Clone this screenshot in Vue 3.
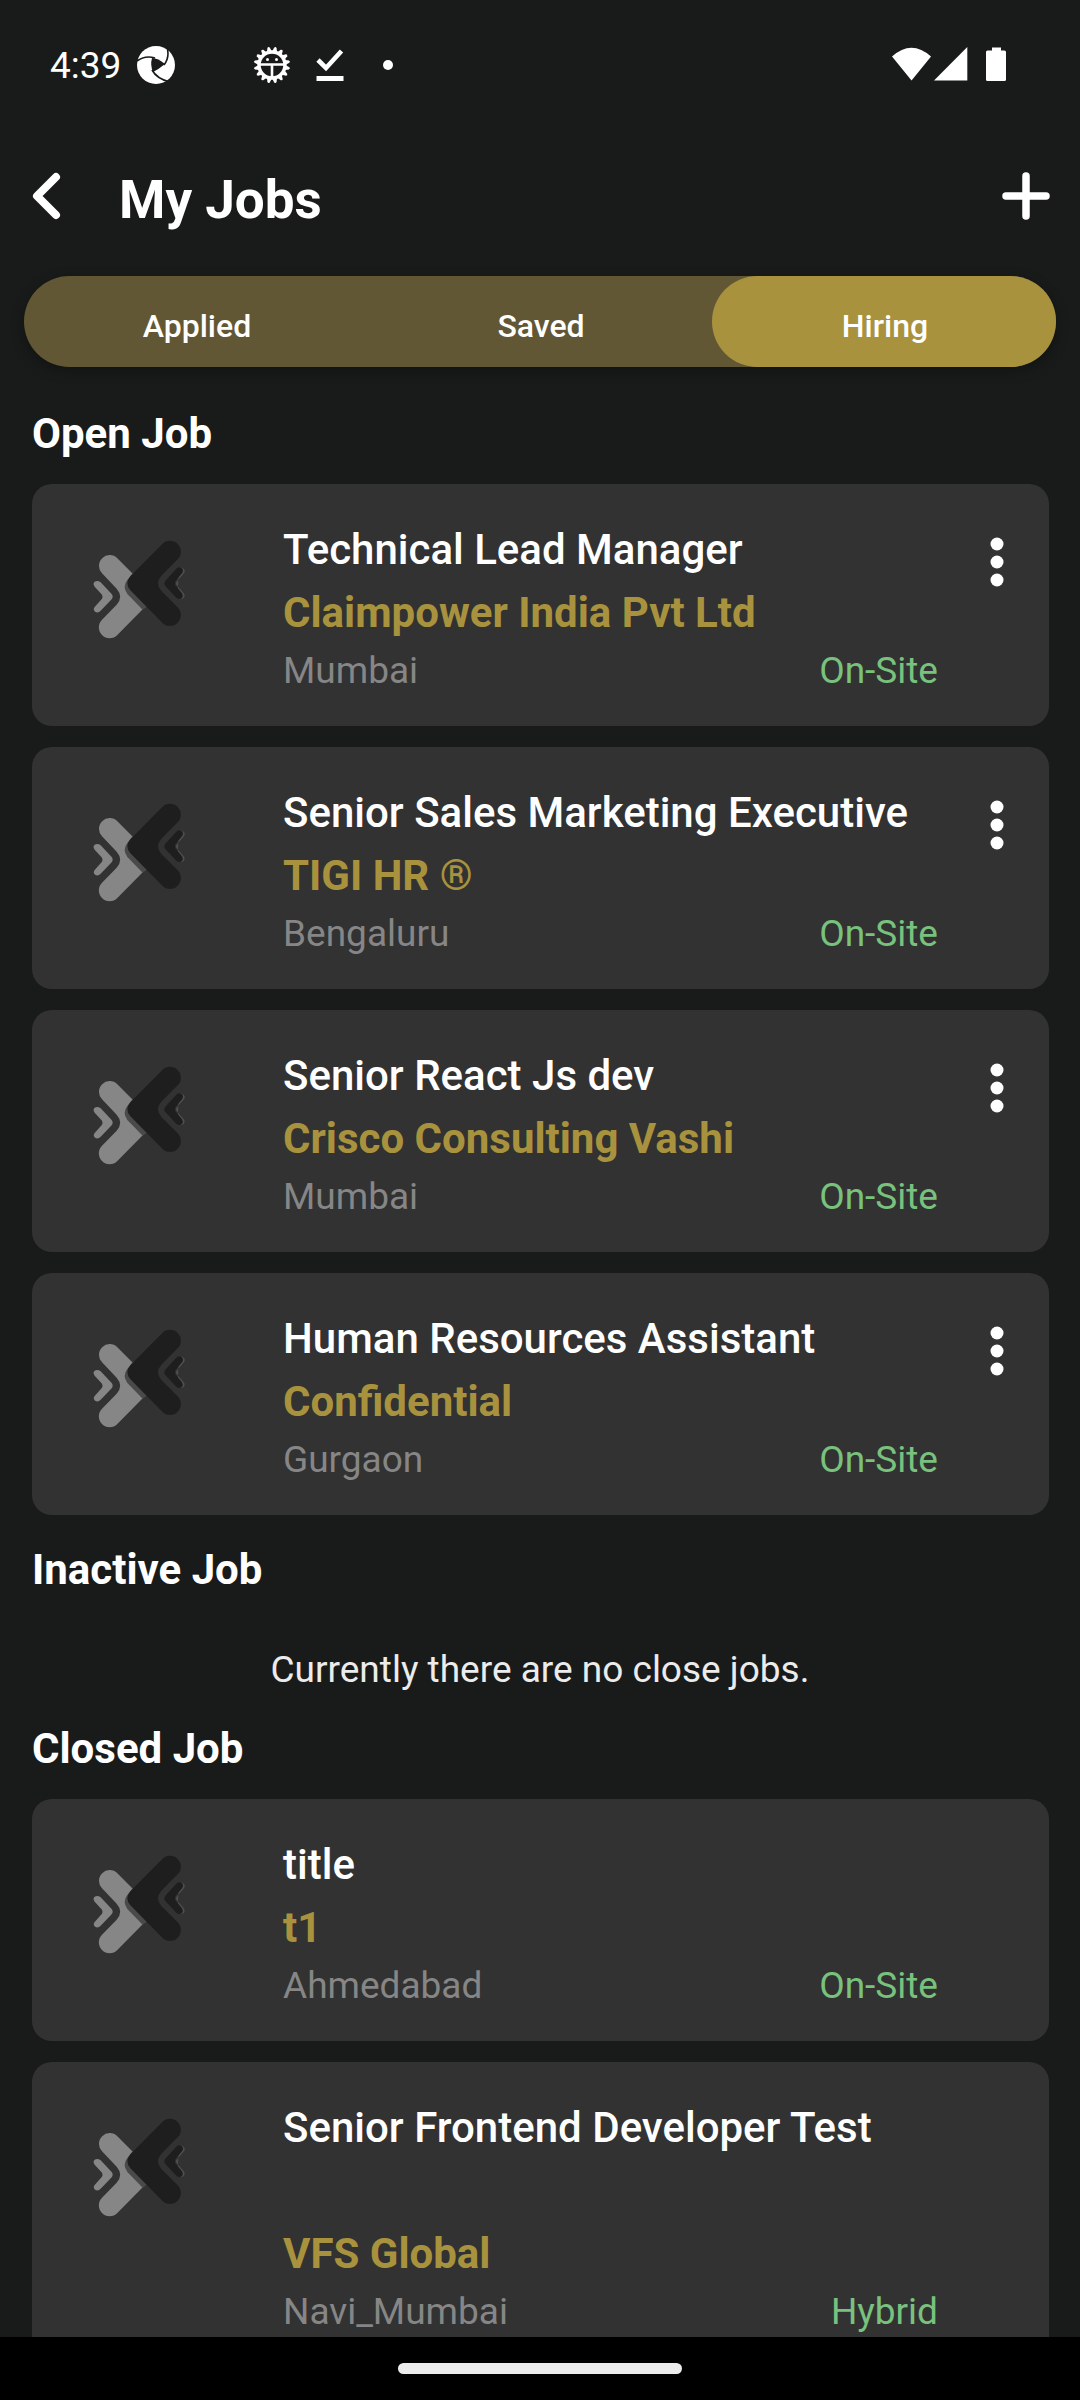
<script setup>
import { ref } from 'vue'

const tabs = ['Applied', 'Saved', 'Hiring']
const active = ref('Hiring')

const sections = [
  {
    heading: 'Open Job',
    menu: true,
    jobs: [
      { title: 'Technical Lead Manager', company: 'Claimpower India Pvt Ltd', city: 'Mumbai', mode: 'On-Site' },
      { title: 'Senior Sales Marketing Executive', company: 'TIGI HR ®', city: 'Bengaluru', mode: 'On-Site' },
      { title: 'Senior React Js dev', company: 'Crisco Consulting Vashi', city: 'Mumbai', mode: 'On-Site' },
      { title: 'Human Resources Assistant', company: 'Confidential', city: 'Gurgaon', mode: 'On-Site' }
    ]
  },
  { heading: 'Inactive Job', empty: 'Currently there are no close jobs.', jobs: [] },
  {
    heading: 'Closed Job',
    menu: false,
    jobs: [
      { title: 'title', company: 't1', city: 'Ahmedabad', mode: 'On-Site' },
      { title: 'Senior Frontend Developer Test', tall: true, company: 'VFS Global', city: 'Navi_Mumbai', mode: 'Hybrid' }
    ]
  }
]

const teeth = Array.from({ length: 16 }, (_, i) => i * 22.5 + 11.25)
</script>

<template>
  <div class="screen">
    <div class="status">
      <span class="time">4:39</span>
      <svg class="swirl" width="38" height="40" viewBox="0 0 38 40" aria-hidden="true">
        <circle cx="19" cy="20" r="19" fill="#fff" />
        <path d="M15 13 Q21 13 28 19 Q22 24 16 27 Q13 20 15 13Z" fill="#191b1a" />
        <path d="M0 16 Q8 10 18 13 M27 20 Q33 12 30 2 M15 25 Q20 34 33 37" fill="none" stroke="#191b1a" stroke-width="1.6" />
      </svg>
      <svg class="gear" width="38" height="38" viewBox="0 0 38 38" aria-hidden="true">
        <g fill="#fff">
          <path v-for="a in teeth" :key="a" d="M16 7 L17.800 1.500 Q19 0 20.200 1.500 L22 7Z" :transform="`rotate(${a} 19 19)`" />
        </g>
        <circle cx="19" cy="19" r="13" fill="none" stroke="#fff" stroke-width="3.4" />
        <path d="M7 18.500 H31 M19 19 V31" stroke="#fff" stroke-width="2.6" />
        <circle cx="14.500" cy="13.500" r="1.5" fill="#fff" />
        <circle cx="23.500" cy="13.500" r="1.5" fill="#fff" />
      </svg>
      <svg class="done" width="28" height="34" viewBox="0 0 28 34" aria-hidden="true">
        <path d="M2 12 L10 20 L25.500 3" fill="none" stroke="#fff" stroke-width="4.6" />
        <rect x="0.5" y="28" width="27" height="5" fill="#fff" />
      </svg>
      <span class="dot"></span>
      <svg class="signals" width="116" height="36" viewBox="0 0 116 36" aria-hidden="true">
        <g fill="#fff">
          <path d="M0 9.5 Q19.5 -8 39 9.5 L19.5 33.5Z" />
          <path d="M42 33.5 L75.3 0 V33.5Z" />
          <path d="M100 0.5 H109 V3.5 H112.5 Q114 3.5 114 5 V32.5 Q114 34 112.5 34 H95.5 Q94 34 94 32.5 V5 Q94 3.5 95.5 3.5 H100Z" />
        </g>
      </svg>
    </div>

    <header class="header">
      <button class="icon-btn" aria-label="Back">
        <svg width="32" height="48" viewBox="0 0 32 48"><path d="M25 5 L6 24 L25 43" fill="none" stroke="#fff" stroke-width="8" stroke-linecap="round" stroke-linejoin="round" /></svg>
      </button>
      <h1>My Jobs</h1>
      <button class="icon-btn" aria-label="Add job">
        <svg width="48" height="48" viewBox="0 0 48 48"><path d="M24 4 V44 M4 24 H44" stroke="#fff" stroke-width="7.5" stroke-linecap="round" /></svg>
      </button>
    </header>

    <main class="body">
      <nav class="tabs">
        <button v-for="t in tabs" :key="t" class="tab" :class="{ active: t === active }" @click="active = t">{{ t }}</button>
      </nav>

      <section v-for="s in sections" :key="s.heading">
        <h2>{{ s.heading }}</h2>
        <p v-if="s.empty" class="empty">{{ s.empty }}</p>
        <div v-if="s.jobs.length" class="list">
          <article v-for="j in s.jobs" :key="j.title" class="card">
            <svg class="logo" width="99" height="100" viewBox="30 60 297 300" aria-hidden="true">
              <path fill="#868686" d="M66 160 A32 32 0 0 1 112 115 L200 203 V256 L112 345 A32 32 0 0 1 66 299 L110 254 Q131 230 110 206Z" />
              <path fill="#868686" d="M44 200 Q38 192 43 186 Q52 179 62 187 L95 222 Q101 230 95 238 L62 272 Q54 281 45 275 Q38 269 44 261 L66 236 Q69 230 66 224Z" />
              <path fill="#4a4a4a" d="M158 160 L142 180 Q126 200 142 222 L188 269 L200 260 L200 180Z" />
              <path fill="#4f4f4f" d="M296 144 Q307 140 314 150 Q316 156 310 162 L289 186 Q287 190 289 194 L310 218 Q317 225 311 234 Q302 241 293 233Z" />
              <path fill="#1e1e1e" d="M247 72 A32 32 0 0 1 293 118 L244 167 Q224 190 244 213 L293 262 A32 32 0 0 1 247 308 L151 211 Q133 190 151 169Z" />
              <path fill="#1e1e1e" d="M289 146 Q298 138 306 145 Q312 152 306 160 L286 184 Q283 190 286 196 L306 220 Q311 228 306 234 Q298 240 289 233 L256 198 Q250 190 256 182Z" />
            </svg>
            <div class="info">
              <h3 :class="{ tall: j.tall }">{{ j.title }}</h3>
              <p class="company">{{ j.company }}</p>
              <p class="meta"><span>{{ j.city }}</span><span class="mode">{{ j.mode }}</span></p>
            </div>
            <div class="side">
              <button v-if="s.menu" class="more" aria-label="More options">
                <svg width="14" height="52" viewBox="0 0 14 52">
                  <g fill="#fff"><circle cx="7" cy="8" r="6.5" /><circle cx="7" cy="26" r="6.5" /><circle cx="7" cy="44" r="6.5" /></g>
                </svg>
              </button>
            </div>
          </article>
        </div>
      </section>
    </main>

    <footer class="gesture"><span class="pill"></span></footer>
  </div>
</template>

<style>
body {
  margin: 0;
  background: #191b1a;
}
</style>

<style scoped>
.screen {
  display: flex;
  flex-direction: column;
  height: 100vh;
  overflow: hidden;
  background: #191b1a;
  color: #fff;
  font-family: Roboto, "Liberation Sans", sans-serif;
}
h1, h2, h3, p {
  margin: 0;
}
button {
  margin: 0;
  padding: 0;
  border: 0;
  background: none;
  color: inherit;
  font: inherit;
  cursor: pointer;
}
svg {
  display: block;
  flex: none;
}
.status {
  display: flex;
  align-items: center;
  flex: none;
  height: 130px;
  padding: 0 72px 0 50px;
}
.time {
  width: 87px;
  padding-top: 2px;
  font-size: 37px;
  line-height: 44px;
}
.gear {
  margin-left: 78px;
}
.done {
  margin-left: 25px;
}
.dot {
  width: 10px;
  height: 10px;
  margin-left: 39px;
  border-radius: 50%;
  background: #fff;
}
.signals {
  margin-left: auto;
}
.header {
  display: flex;
  align-items: center;
  flex: none;
  height: 132px;
  padding: 0 30px 0 31px;
}
.icon-btn {
  flex: none;
}
h1 {
  flex: 1;
  padding: 8px 0 0 56px;
  font-size: 53px;
  line-height: 64px;
  font-weight: 700;
}
.body {
  flex: 1;
  min-height: 0;
  padding: 14px 0 0;
  overflow: hidden auto;
  scrollbar-width: none;
}
.tabs {
  display: flex;
  height: 91px;
  margin: 0 24px 12px;
  border-radius: 46px;
  background: #625735;
  box-shadow: 0 4px 14px rgba(0, 0, 0, 0.3);
}
.tab {
  flex: 1;
  padding: 8px 0 0 2px;
  border-radius: 46px;
  font-size: 32px;
  font-weight: 500;
}
.tab.active {
  background: #a8923e;
}
h2 {
  padding: 30px 32px 26px;
  font-size: 42px;
  line-height: 49px;
  font-weight: 700;
}
.empty {
  padding: 28px 32px 3px;
  color: #ececec;
  font-size: 37px;
  line-height: 43px;
  text-align: center;
}
.list {
  display: flex;
  flex-direction: column;
  gap: 21px;
  padding: 0 31px 0 32px;
}
.card {
  display: flex;
  align-items: flex-start;
  padding: 34px 0 29px 58px;
  border-radius: 20px;
  background: #323232;
}
.logo {
  margin: 22px 94px 0 0;
}
.info {
  flex: 1;
  min-width: 0;
}
h3 {
  font-size: 42px;
  line-height: 63px;
  font-weight: 500;
}
h3.tall {
  min-height: 126px;
}
.company {
  color: #a8923e;
  font-size: 42px;
  line-height: 63px;
  font-weight: 700;
}
.meta {
  display: flex;
  justify-content: space-between;
  color: #868686;
  font-size: 37px;
  line-height: 53px;
}
.mode {
  color: #78c27e;
}
.side {
  display: flex;
  justify-content: flex-end;
  width: 79px;
  padding: 18px 32px 0 0;
}
.more {
  display: flex;
  justify-content: center;
  width: 40px;
}
.gesture {
  display: flex;
  align-items: center;
  justify-content: center;
  flex: none;
  height: 63px;
  background: #000;
}
.pill {
  width: 284px;
  height: 11px;
  border-radius: 6px;
  background: #ececec;
}
</style>
